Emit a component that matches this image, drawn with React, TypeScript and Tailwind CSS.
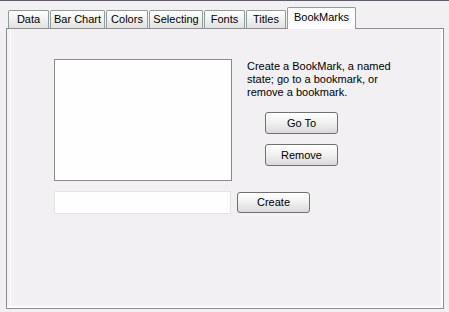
const tabs = [
  { label: "Data", w: "w-[41px]" },
  { label: "Bar Chart", w: "w-[55px]" },
  { label: "Colors", w: "w-[42px]" },
  { label: "Selecting", w: "w-[54px]" },
  { label: "Fonts", w: "w-[41px]" },
  { label: "Titles", w: "w-[40px]" },
];

function XpButton({ label, className = "" }: { label: string; className?: string }) {
  return (
    <button
      className={`h-[21px] w-[73px] rounded-[3px] border border-[#707070] bg-gradient-to-b from-[#ffffff] via-[#f0f0f0] to-[#d9d9d9] text-[11px] leading-none text-black ${className}`}
    >
      {label}
    </button>
  );
}

export default function App() {
  return (
    <div
      className="h-[312px] w-[449px] border-t border-[#5d5d6b] bg-[#f2f0f3] pl-[6px] pt-[6px] text-black"
      style={{ fontFamily: '"Liberation Sans", Arial, sans-serif' }}
    >
      <div className="relative z-10 flex h-[21px] items-end gap-px pl-[2px]">
        {tabs.map((t) => (
          <div
            key={t.label}
            className={`flex h-[18px] ${t.w} items-center justify-center rounded-t-[2px] border border-b-0 border-[#919b9c] bg-gradient-to-b from-[#ffffff] to-[#e2e2e0] text-[11px] leading-none`}
          >
            {t.label}
          </div>
        ))}
        <div className="-mb-px flex h-[22px] w-[69px] items-center justify-center rounded-t-[2px] border border-b-0 border-[#919b9c] bg-[#fcfcfe] pb-[3px] text-[11px] leading-none">
          BookMarks
        </div>
      </div>

      <div className="h-[281px] w-[438px] border border-[#8e8e92] shadow-[inset_-2px_-2px_0_#ffffff,inset_3px_0_0_#f2f0f3,inset_4px_0_0_#ffffff]">
        <div className="flex pl-[47px] pt-[30px]">
          <div className="h-[122px] w-[178px] border border-[#8a8a8e] bg-[#fdfefd]" />
          <div className="ml-[15px] pt-[1px]">
            <p className="text-[11px] leading-[13px]">
              Create a BookMark, a named
              <br />
              state; go to a bookmark, or
              <br />
              remove a bookmark.
            </p>
            <div className="ml-[18px] mt-[13px] flex flex-col gap-[10px]">
              <XpButton label="Go To" className="h-[22px]" />
              <XpButton label="Remove" className="h-[22px]" />
            </div>
          </div>
        </div>
        <div className="mt-[10px] flex items-center gap-[6px] pl-[47px]">
          <input className="h-[23px] w-[177px] border border-[#e4e4e6] bg-[#fdfefd] outline-none" />
          <XpButton label="Create" />
        </div>
      </div>
    </div>
  );
}
